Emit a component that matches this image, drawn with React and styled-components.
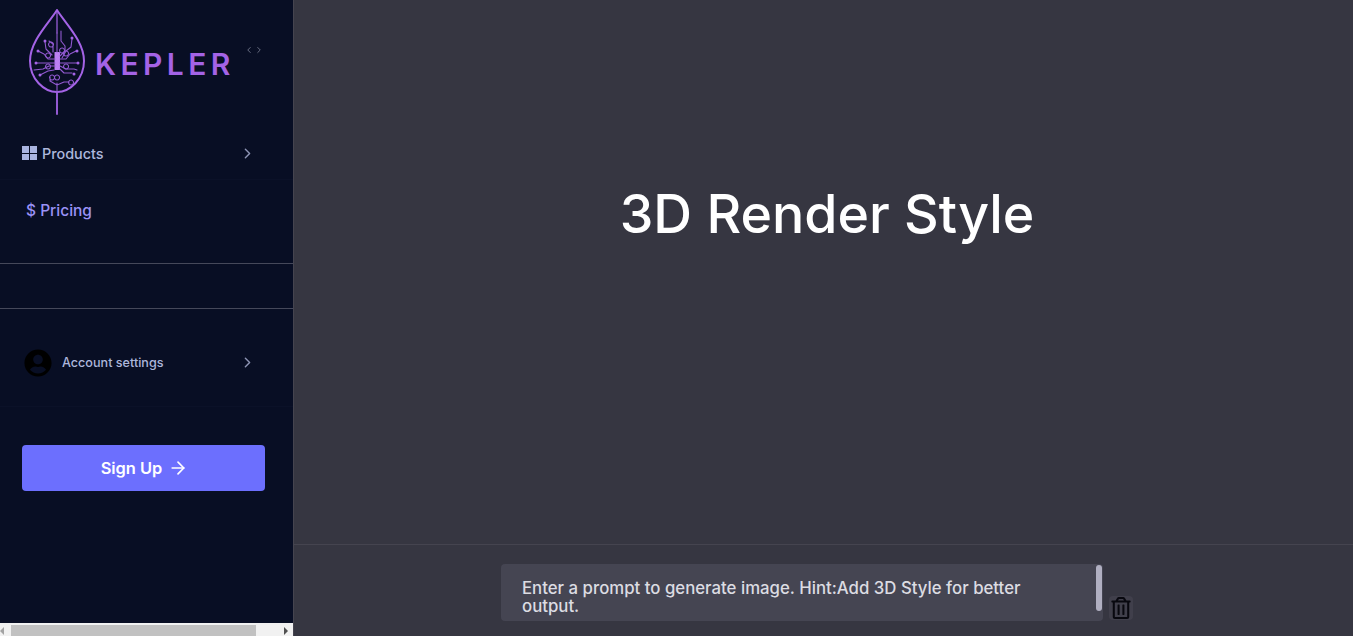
import React from 'react';
import styled, { createGlobalStyle } from 'styled-components';
import { ArrowRight, ChevronLeft, ChevronRight } from 'lucide-react';
import { FaRegTrashAlt, FaUserCircle } from 'react-icons/fa';

const GlobalStyle = createGlobalStyle`
  html, body {
    margin: 0;
    height: 100%;
    overflow: hidden;
    background: #363641;
    font-family: Inter, "Open Sans", sans-serif;
  }
  * {
    box-sizing: border-box;
  }
`;

const Page = styled.div`
  display: flex;
  width: 1353px;
  height: 636px;
`;

const Sidebar = styled.aside`
  display: flex;
  flex-direction: column;
  flex: 0 0 294px;
  height: 100%;
  background: #080e24;
  border-right: 1px solid #45444f;
`;

const SidebarBody = styled.div`
  flex: 1;
  display: flex;
  flex-direction: column;
`;

const LogoRow = styled.div`
  display: flex;
  align-items: center;
  height: 126px;
  padding: 0 0 2px 28px;
`;

const LogoWord = styled.span`
  margin: 0 0 0 7px;
  padding-top: 4px;
  font-size: 30px;
  font-weight: 600;
  letter-spacing: 4.4px;
  color: #a463e6;
`;

const Collapse = styled.div`
  display: flex;
  margin: 0 0 24px 9px;
  color: #7b8094;
`;

const NavRow = styled.div`
  display: flex;
  align-items: center;
  height: 54px;
  padding: 1px 37px 0 22px;
  border-bottom: 1px solid #0b1128;
`;

const GridIcon = styled.span`
  display: grid;
  grid-template-columns: 7px 7px;
  grid-auto-rows: 6.5px;
  gap: 1px;
  i {
    background: #a9b4e0;
  }
`;

const NavLabel = styled.span`
  flex: 1;
  margin-left: 5px;
  font-size: 14.4px;
  font-weight: 500;
  color: #adb7dc;
`;

const PricingRow = styled.div`
  height: 84px;
  padding: 21px 0 0 26px;
  font-size: 15.5px;
  font-weight: 500;
  line-height: 20px;
  color: #9a92f7;
  border-bottom: 1px solid #45485a;
`;

const EmptyRow = styled.div`
  height: 45px;
  border-bottom: 1px solid #45485a;
`;

const AccountRow = styled.div`
  display: flex;
  align-items: center;
  height: 88px;
  margin-top: 10px;
  padding: 0 37px 0 24px;
  border-bottom: 1px solid #0b1128;
`;

const AccountLabel = styled.span`
  flex: 1;
  margin-left: 10px;
  font-size: 12.6px;
  font-weight: 500;
  color: #adb7dc;
`;

const SignUp = styled.button`
  display: flex;
  align-items: center;
  justify-content: center;
  gap: 6px;
  width: 243px;
  height: 46px;
  margin: 38px 0 0 22px;
  padding: 0 0 0 2px;
  border: none;
  border-radius: 4px;
  background: #6c6ffe;
  color: #fff;
  font-family: inherit;
  font-size: 16.4px;
  font-weight: 600;
`;

const ScrollBar = styled.div`
  display: flex;
  align-items: center;
  height: 13px;
  background: #f1f1f1;
`;

const ScrollThumb = styled.div`
  width: 245px;
  height: 11px;
  margin: 2px 0 0 7px;
  background: #c1c1c1;
`;

const Arrow = styled.span`
  width: 0;
  height: 0;
  margin-top: 2px;
  border-top: 4px solid transparent;
  border-bottom: 4px solid transparent;
  ${(p) =>
    p.$left
      ? 'border-right: 4px solid #a3a3a3;'
      : 'border-left: 4px solid #505050; margin-left: 28px;'}
`;

const Main = styled.main`
  flex: 1;
  display: flex;
  flex-direction: column;
`;

const Stage = styled.div`
  display: flex;
  justify-content: center;
  height: 545px;
  padding: 177px 0 0 7px;
  border-bottom: 1px solid #45444f;
`;

const Title = styled.h1`
  margin: 0;
  font-size: 53.7px;
  line-height: 74px;
  font-weight: 500;
  color: #fff;
`;

const PromptBar = styled.div`
  display: flex;
  align-items: flex-end;
  padding: 19px 0 0 207px;
`;

const PromptBox = styled.div`
  position: relative;
  width: 602px;
  height: 57px;
  padding: 15px 60px 0 21px;
  border-radius: 4px;
  background: #454552;
  color: #dcdce2;
  font-size: 16.8px;
  font-weight: 500;
  line-height: 18px;
`;

const PromptScroll = styled.div`
  position: absolute;
  top: 1px;
  right: 1px;
  width: 6px;
  height: 46px;
  border-radius: 3px;
  background: #b0afc1;
`;

const TrashButton = styled.div`
  display: flex;
  align-items: center;
  justify-content: center;
  width: 24px;
  height: 24px;
  margin: 0 0 1px 6px;
  border-radius: 4px;
  background: #403f4b;
  color: #08080f;
`;

const LeafLogo = () => (
  <svg width="60" height="110" viewBox="28 8 60 110" fill="none" stroke="#a463e6" strokeLinecap="round" strokeLinejoin="round">
    <path strokeWidth="2" d="M57 11 C49 24 30 42 30 62 C30 80 44 93 57 93 C70 93 84 80 84 62 C84 42 65 24 57 11 Z" />
    <path strokeWidth="1.8" d="M57 93 V115" />
    <path strokeWidth="1.2" d="M57 11 V34" />
    <rect x="54.5" y="53" width="5.5" height="18" rx="0.5" fill="#bb80f2" stroke="none" />
    <g strokeWidth="1.1" stroke="#9159d0">
      <path d="M57 34 V53 M61 32 V42 L65 47 V52 L60 57" />
      <path d="M49 42 L53 45 V53 M51 43 a2.5 2.5 0 1 0 .1 0" />
      <path d="M72 40 L71 48 L66 52 L62 59 M62 49 a2.5 2.5 0 1 0 .1 0" />
      <path d="M45 43 L46 50 L52 56 M38 52 L44 55 L48 60 H55" />
      <path d="M36 64 H55 M60 64 H78" />
      <path d="M60 60 L66 60 L70 55 L76 52" />
      <path d="M34 71 L43 70 L49 67 H55 M60 67 L66 70 H74 L77 71" />
      <path d="M40 76 L48 72 L54 71 M60 70 L64 74 H72" />
      <path d="M57 93 V84 M57 86 L50 82 V78 M57 86 L64 83 L69 83 M52 76 a2.5 2.5 0 1 0 .1 0 M57 76 a2.5 2.5 0 1 0 .1 0" />
      <path d="M66 65 a2.5 2.5 0 1 0 .1 0 M48 65 a2.5 2.5 0 1 0 .1 0 M48 54 a2.5 2.5 0 1 0 .1 0 M66 52 a2.5 2.5 0 1 0 .1 0 M71 81 a2.5 2.5 0 1 0 .1 0" />
    </g>
    <g fill="#a463e6" stroke="none">
      <circle cx="45" cy="42" r="1.5" />
      <circle cx="72" cy="39" r="1.5" />
      <circle cx="38" cy="52" r="1.5" />
      <circle cx="36" cy="64" r="1.5" />
      <circle cx="78" cy="64" r="1.5" />
      <circle cx="77" cy="52" r="1.5" />
      <circle cx="40" cy="76" r="1.5" />
      <circle cx="74" cy="75" r="1.5" />
    </g>
  </svg>
);

export default function App() {
  return (
    <Page>
      <GlobalStyle />
      <Sidebar>
        <SidebarBody>
          <LogoRow>
            <LeafLogo />
            <LogoWord>KEPLER</LogoWord>
            <Collapse>
              <ChevronLeft size={10} />
              <ChevronRight size={10} />
            </Collapse>
          </LogoRow>
          <NavRow>
            <GridIcon>
              <i />
              <i />
              <i />
              <i />
            </GridIcon>
            <NavLabel>Products</NavLabel>
            <ChevronRight size={17} color="#8d94b4" />
          </NavRow>
          <PricingRow>$ Pricing</PricingRow>
          <EmptyRow />
          <AccountRow>
            <FaUserCircle size={28} color="#000" />
            <AccountLabel>Account settings</AccountLabel>
            <ChevronRight size={17} color="#8d94b4" />
          </AccountRow>
          <SignUp>
            Sign Up
            <ArrowRight size={20} />
          </SignUp>
        </SidebarBody>
        <ScrollBar>
          <Arrow $left />
          <ScrollThumb />
          <Arrow />
        </ScrollBar>
      </Sidebar>
      <Main>
        <Stage>
          <Title>3D Render Style</Title>
        </Stage>
        <PromptBar>
          <PromptBox>
            Enter a prompt to generate image. Hint:Add 3D Style for better output.
            <PromptScroll />
          </PromptBox>
          <TrashButton>
            <FaRegTrashAlt size={22} />
          </TrashButton>
        </PromptBar>
      </Main>
    </Page>
  );
}
